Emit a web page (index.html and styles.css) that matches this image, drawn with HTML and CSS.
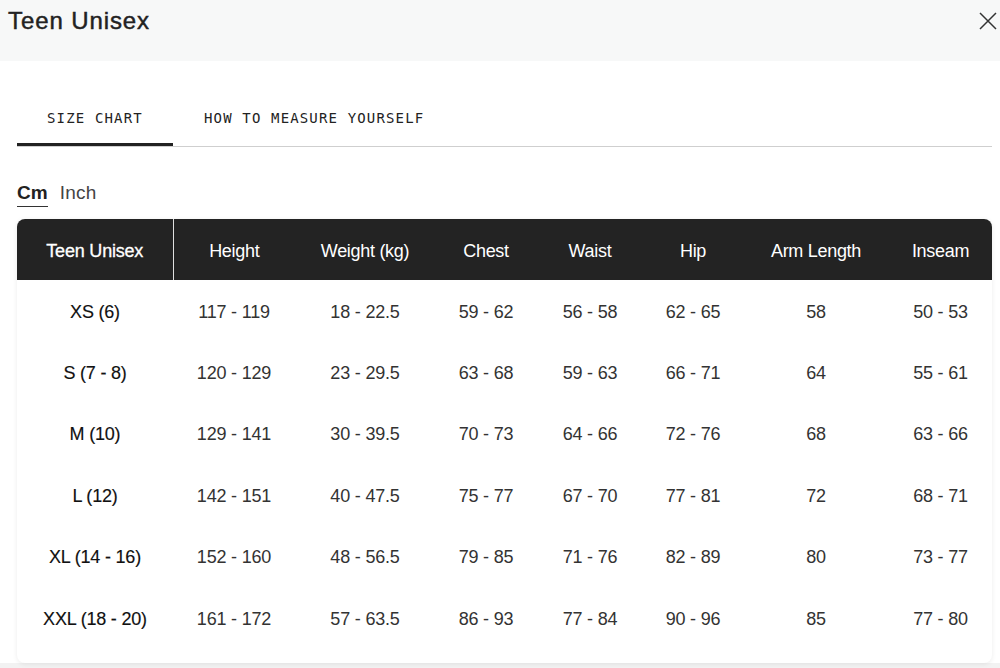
FILE: index.html
```html
<!DOCTYPE html>
<html>
<head>
<meta charset="utf-8">
<link rel="stylesheet" href="styles.css">
</head>
<body>
<div class="modal">
  <header class="top">
    <h1 class="title">Teen Unisex</h1>
    <button class="close" aria-label="Close">
      <svg width="18" height="18" viewBox="0 0 18 18"><path d="M1 1 L17 17 M17 1 L1 17" stroke="#333" stroke-width="1.5" fill="none"/></svg>
    </button>
  </header>
  <div class="content">
    <nav class="tabs">
      <div class="tab active">SIZE CHART</div>
      <div class="tab">HOW TO MEASURE YOURSELF</div>
    </nav>
    <div class="units">
      <span class="unit on">Cm</span>
      <span class="unit">Inch</span>
    </div>
    <div class="card">
      <table class="chart">
        <colgroup>
          <col class="c1"><col class="c2"><col class="c3"><col class="c4"><col class="c5"><col class="c6"><col class="c7"><col class="c8">
        </colgroup>
        <thead>
          <tr><th class="first">Teen Unisex</th><th>Height</th><th>Weight (kg)</th><th>Chest</th><th>Waist</th><th>Hip</th><th>Arm Length</th><th>Inseam</th></tr>
        </thead>
        <tbody>
          <tr><td class="size">XS (6)</td><td>117 - 119</td><td>18 - 22.5</td><td>59 - 62</td><td>56 - 58</td><td>62 - 65</td><td>58</td><td>50 - 53</td></tr>
          <tr><td class="size">S (7 - 8)</td><td>120 - 129</td><td>23 - 29.5</td><td>63 - 68</td><td>59 - 63</td><td>66 - 71</td><td>64</td><td>55 - 61</td></tr>
          <tr><td class="size">M (10)</td><td>129 - 141</td><td>30 - 39.5</td><td>70 - 73</td><td>64 - 66</td><td>72 - 76</td><td>68</td><td>63 - 66</td></tr>
          <tr><td class="size">L (12)</td><td>142 - 151</td><td>40 - 47.5</td><td>75 - 77</td><td>67 - 70</td><td>77 - 81</td><td>72</td><td>68 - 71</td></tr>
          <tr><td class="size">XL (14 - 16)</td><td>152 - 160</td><td>48 - 56.5</td><td>79 - 85</td><td>71 - 76</td><td>82 - 89</td><td>80</td><td>73 - 77</td></tr>
          <tr><td class="size">XXL (18 - 20)</td><td>161 - 172</td><td>57 - 63.5</td><td>86 - 93</td><td>77 - 84</td><td>90 - 96</td><td>85</td><td>77 - 80</td></tr>
        </tbody>
      </table>
    </div>
  </div>
</div>
</body>
</html>
```

FILE: styles.css
```css
* { box-sizing: border-box; }
html, body { margin: 0; padding: 0; }
body {
  width: 1000px;
  height: 668px;
  overflow: hidden;
  background: #f2f2f2;
  font-family: "Liberation Sans", Arial, sans-serif;
  color: #222;
}
.modal {
  background: #fff;
  height: 668px;
  display: flex;
  flex-direction: column;
}
.top {
  background: #f7f8f8;
  height: 61px;
  display: flex;
  justify-content: space-between;
  align-items: flex-start;
  padding: 0 0 0 8px;
}
.title {
  margin: 7px 0 0 0;
  font-size: 24px;
  font-weight: normal;
  -webkit-text-stroke: 0.45px #222;
  color: #222;
  line-height: 28px;
  letter-spacing: 0.9px;
}
.close {
  border: 0;
  background: transparent;
  padding: 0;
  margin: 12px 3px 0 0;
  width: 18px;
  height: 18px;
  display: flex;
}
.content {
  flex: 1;
  padding: 0 8px 0 17px;
  display: flex;
  flex-direction: column;
  background: linear-gradient(#fff 0, #fff 602px, #f2f2f2 602px);
}
.tabs {
  margin-top: 42px;
  display: flex;
  border-bottom: 1px solid #cfcfcf;
  width: 975px;
}
.tab {
  font-family: "DejaVu Sans Mono", "Liberation Mono", monospace;
  font-size: 14px;
  letter-spacing: 1.15px;
  color: #222;
  height: 43px;
  line-height: 30px;
  padding: 0 31px 0 31px;
}
.tab.active {
  width: 156px;
  padding: 0 0 0 30px;
  border-bottom: 3px solid #222;
  margin-bottom: -1px;
}
.units {
  margin-top: 35px;
  display: flex;
  gap: 12px;
  font-size: 19px;
  height: 26px;
  align-items: flex-start;
}
.unit { color: #444; line-height: 22px; padding-bottom: 2px; letter-spacing: 0.3px; }
.unit.on {
  font-weight: bold;
  color: #222;
  border-bottom: 1.5px solid #333;
  letter-spacing: 0;
}
.card {
  margin-top: 11px;
  width: 975px;
  background: #fff;
  border-radius: 8px;
  box-shadow: 0 1px 5px rgba(0,0,0,0.08);
  overflow: hidden;
  padding-bottom: 15px;
}
.chart {
  width: 975px;
  border-collapse: collapse;
  table-layout: fixed;
  font-size: 18px;
}
.c1 { width: 156px; }
.c2 { width: 122px; }
.c3 { width: 140px; }
.c4 { width: 102px; }
.c5 { width: 106px; }
.c6 { width: 100px; }
.c7 { width: 146px; }
.c8 { width: 103px; }
.chart thead tr { background: #232323; }
.chart th {
  color: #fff;
  font-weight: normal;
  height: 61px;
  text-align: center;
  padding: 3px 0 0 0;
  letter-spacing: -0.3px;
}
.chart th.first {
  border-right: 1px solid #e0e0e0;
  -webkit-text-stroke: 0.3px #fff;
  letter-spacing: -0.2px;
}
.chart td {
  height: 61.4px;
  text-align: center;
  color: #333;
  padding: 3px 0 0 0;
  letter-spacing: -0.2px;
}
.chart td.size {
  color: #111;
  -webkit-text-stroke: 0.15px #111;
  letter-spacing: -0.2px;
}
```
